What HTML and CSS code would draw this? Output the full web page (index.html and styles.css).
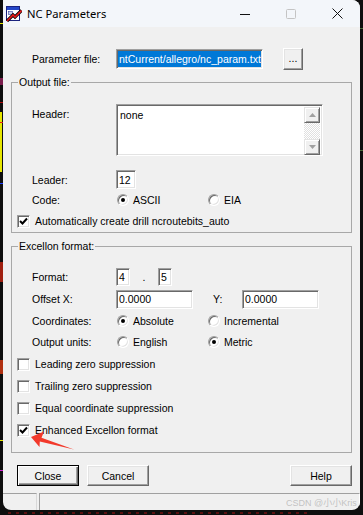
FILE: index.html
```html
<!DOCTYPE html>
<html>
<head>
<meta charset="utf-8">
<title>NC Parameters</title>
<link rel="stylesheet" href="styles.css">
</head>
<body>
<div class="screen">
  <span class="deco d1"></span>
  <span class="deco d2"></span>
  <span class="deco d3"></span>
  <span class="deco d4"></span>
  <span class="deco d5"></span>
  <span class="deco d6"></span>
  <span class="deco d7"></span>
  <span class="deco d8"></span>
  <span class="deco d9"></span>
  <span class="deco d10"></span>
  <span class="deco d11"></span>
  <span class="deco d12"></span>
  <span class="deco d13"></span>

  <div class="window">
    <div class="titlebar">
      <svg class="app-icon" viewBox="0 0 16 16" width="16" height="16">
        <rect x="0.5" y="0.5" width="13" height="14" fill="#fff" stroke="#1a237e"/>
        <rect x="1" y="1" width="12" height="3" fill="#2447c8"/>
        <rect x="2.5" y="5.5" width="4" height="3" fill="#c8cde8" stroke="#3a4aa0" stroke-width="0.6"/>
        <path d="M1 15 L7 9 L9 11 L15.5 4.5" stroke="#000" stroke-width="3.2" fill="none"/>
        <path d="M1 15 L7 9 L9 11 L15.5 4.5" stroke="#ee1c1c" stroke-width="1.6" fill="none"/>
      </svg>
      <span class="title">NC Parameters</span>
      <div class="caption">
        <span class="cap"><svg width="10" height="10" viewBox="0 0 10 10"><path d="M0 5.5 H10" stroke="#111" stroke-width="1"/></svg></span>
        <span class="cap"><svg width="10" height="10" viewBox="0 0 10 10"><rect x="0.5" y="0.5" width="9" height="9" rx="1" fill="none" stroke="#c4c4c4" stroke-width="1"/></svg></span>
        <span class="cap"><svg width="11" height="11" viewBox="0 0 11 11"><path d="M0.5 0.5 L10.5 10.5 M10.5 0.5 L0.5 10.5" stroke="#111" stroke-width="1"/></svg></span>
      </div>
    </div>

    <div class="content">
      <div class="param-row">
        <span class="label">Parameter file:</span>
        <div class="field param-field"><span class="sel">ntCurrent/allegro/nc_param.txt</span></div>
        <button class="btn browse">...</button>
      </div>

      <fieldset class="group output">
        <legend>Output file:</legend>
        <div class="gbody out-body">
          <div class="row header-row">
            <span class="label top">Header:</span>
            <div class="field textarea">
              <span class="ta-text">none</span>
              <div class="vscroll">
                <span class="sbtn"><svg width="7" height="4" viewBox="0 0 7 4"><path d="M0 4 L3.5 0 L7 4 Z" fill="#a0a0a0"/></svg></span>
                <span class="track"></span>
                <span class="sbtn"><svg width="7" height="4" viewBox="0 0 7 4"><path d="M0 0 L3.5 4 L7 0 Z" fill="#a0a0a0"/></svg></span>
              </div>
            </div>
          </div>
          <div class="row leader-row">
            <span class="label">Leader:</span>
            <div class="field leader">12</div>
          </div>
          <div class="row code-row">
            <span class="label">Code:</span>
            <span class="opt"><span class="radio"><span class="dot"></span></span><span>ASCII</span></span>
            <span class="opt"><span class="radio"></span><span>EIA</span></span>
          </div>
          <div class="crow auto-row">
            <span class="check"><svg width="9" height="9" viewBox="0 0 9 9"><path d="M1 4 L3.5 6.5 L8 1.5" stroke="#000" stroke-width="2" fill="none"/></svg></span>
            <span>Automatically create drill ncroutebits_auto</span>
          </div>
        </div>
      </fieldset>

      <fieldset class="group excellon">
        <legend>Excellon format:</legend>
        <div class="gbody exc-body">
          <div class="row r22">
            <span class="label">Format:</span>
            <div class="field fmt">4</div>
            <span class="fdot">.</span>
            <div class="field fmt">5</div>
          </div>
          <div class="row r22">
            <span class="label">Offset X:</span>
            <div class="field offset">0.0000</div>
            <span class="ylabel">Y:</span>
            <div class="field offset">0.0000</div>
          </div>
          <div class="row r21">
            <span class="label">Coordinates:</span>
            <span class="opt"><span class="radio"><span class="dot"></span></span><span>Absolute</span></span>
            <span class="opt"><span class="radio"></span><span>Incremental</span></span>
          </div>
          <div class="row r22">
            <span class="label">Output units:</span>
            <span class="opt"><span class="radio"></span><span>English</span></span>
            <span class="opt"><span class="radio"><span class="dot"></span></span><span>Metric</span></span>
          </div>
          <div class="crow r22">
            <span class="check"></span>
            <span>Leading zero suppression</span>
          </div>
          <div class="crow r22">
            <span class="check"></span>
            <span>Trailing zero suppression</span>
          </div>
          <div class="crow r22">
            <span class="check"></span>
            <span>Equal coordinate suppression</span>
          </div>
          <div class="crow r22">
            <span class="check"><svg width="9" height="9" viewBox="0 0 9 9"><path d="M1 4 L3.5 6.5 L8 1.5" stroke="#000" stroke-width="2" fill="none"/></svg></span>
            <span>Enhanced Excellon format</span>
          </div>
        </div>
      </fieldset>

      <div class="buttons">
        <button class="btn default">Close</button>
        <button class="btn">Cancel</button>
        <button class="btn help">Help</button>
      </div>
    </div>

    <div class="statusbar">
      <span class="panel p1"></span>
      <span class="panel p2"></span>
    </div>
  </div>

  <svg class="arrow" width="363" height="515" viewBox="0 0 363 515">
    <polygon points="31,437 44,431.5 41.5,437.8 74,449.6 39.8,441.6 39.5,447" fill="#f2392b"/>
  </svg>
  <div class="watermark">CSDN @小小Kris</div>
</div>
</body>
</html>
```

FILE: styles.css
```css
* { box-sizing: border-box; }

html, body {
  margin: 0;
  padding: 0;
}

body {
  background: #0e0e0e;
  font-family: "Liberation Sans", Arial, sans-serif;
  font-size: 10.5px;
  color: #000;
}

.screen {
  position: relative;
  width: 363px;
  height: 515px;
  overflow: hidden;
  background: #0e0e0e;
}

/* background canvas decorations (the PCB editor behind the dialog) */
.deco { position: absolute; display: block; }
.d1 { left: 0; top: 23px; width: 4px; height: 1px; background: #e6e600; }
.d2 { left: 0; top: 78px; width: 4px; height: 7px; background: #7a1d4c; }
.d3 { left: 0; top: 102px; width: 3px; height: 1px; background: #b01010; }
.d4 { left: 0; top: 112px; width: 2px; height: 60px; background: #e6e600; }
.d5 { left: 0; top: 122px; width: 4px; height: 1px; background: #e02020; }
.d6 { left: 0; top: 183px; width: 4px; height: 1px; background: #2040ff; }
.d7 { left: 0; top: 262px; width: 3px; height: 20px; background: #a02010; }
.d8 { left: 0; top: 360px; width: 3px; height: 14px; background: #b03010; }
.d9 { left: 0; top: 440px; width: 3px; height: 1px; background: #e6e600; }
.d10 { left: 0; top: 470px; width: 3px; height: 1px; background: #d020d0; }
.d11 { left: 360px; top: 28px; width: 3px; height: 1px; background: #4a6a3a; }
.d12 { left: 360px; top: 150px; width: 3px; height: 1px; background: #4a6a3a; }
.d13 { left: 8px; top: 512px; width: 300px; height: 2px; background: repeating-linear-gradient(90deg, #5a1010 0 3px, transparent 3px 8px); }

.window {
  position: relative;
  z-index: 1;
  margin-left: 3px;
  width: 357px;
  height: 510px;
  background: #f0f0f0;
  border-radius: 0 8px 8px 8px;
  overflow: hidden;
  display: flex;
  flex-direction: column;
}

.titlebar {
  height: 27px;
  flex: none;
  background: #f3f6fa;
  display: flex;
  align-items: center;
  padding-left: 3px;
}

.app-icon { flex: none; display: block; }

.title {
  margin-left: 5px;
  font-family: "Noto Sans", "Liberation Sans", sans-serif;
  font-size: 11.2px;
  color: #000;
}

.caption {
  margin-left: auto;
  display: flex;
}

.cap {
  width: 46px;
  height: 27px;
  display: flex;
  align-items: center;
  justify-content: center;
}

.content {
  padding: 21px 8px 0;
  display: flex;
  flex-direction: column;
}

.label {
  width: 84px;
  flex: none;
  white-space: nowrap;
}

.label.top {
  align-self: flex-start;
  padding-top: 4px;
}

.param-row {
  height: 22px;
  display: flex;
  align-items: center;
  padding-left: 21px;
}

.field {
  background: #fff;
  border: 1px solid;
  border-color: #a0a0a0 #fff #fff #a0a0a0;
  box-shadow: inset 1px 1px #696969, inset -1px -1px #e3e3e3;
  height: 19px;
  padding: 0 2px;
  display: flex;
  align-items: center;
  white-space: nowrap;
  overflow: hidden;
  flex: none;
}

.param-field {
  width: 147px;
  height: 20px;
  padding: 1px;
}

.sel {
  display: flex;
  align-items: center;
  height: 100%;
  width: 100%;
  background: #0078d7;
  color: #fff;
  padding-left: 1px;
  overflow: hidden;
  white-space: nowrap;
}

.btn {
  font-family: inherit;
  font-size: inherit;
  color: #000;
  background: #f0f0f0;
  border: 1px solid;
  border-color: #fff #696969 #696969 #fff;
  box-shadow: inset -1px -1px #a0a0a0, inset 1px 1px #e3e3e3;
  width: 62px;
  height: 21px;
  padding: 0;
  margin: 0;
  flex: none;
}

.btn.default {
  border-color: #000;
  box-shadow: inset 1px 1px #fff, inset -1px -1px #696969, inset -2px -2px #a0a0a0;
}

.browse {
  width: 20px;
  height: 22px;
  margin-left: 20px;
  padding-bottom: 3px;
}

.group {
  margin: 0;
  padding: 0;
  min-width: 0;
  border: 1px solid #a8a8a8;
}

.group legend {
  margin-left: 6px;
  padding: 0 1px;
  line-height: 13px;
}

.output { margin-top: 6px; }
.excellon { margin-top: 7px; }

.gbody {
  display: flex;
  flex-direction: column;
  padding-left: 5px;
}

.out-body { padding-top: 15px; }
.exc-body { padding-top: 13px; padding-bottom: 11px; }

.row {
  display: flex;
  align-items: center;
  padding-left: 15px;
}

.crow {
  display: flex;
  align-items: center;
  gap: 5px;
}

.header-row { height: 52px; align-items: flex-start; }
.leader-row { height: 21px; margin-top: 13px; }
.code-row { height: 20px; }
.auto-row { height: 22px; }
.r22 { height: 22px; }
.r21 { height: 21px; }

.textarea {
  width: 207px;
  height: 52px;
  padding: 2px 2px 2px 3px;
  align-items: flex-start;
}

.ta-text {
  flex: 1;
  padding-top: 2px;
}

.vscroll {
  width: 16px;
  height: 48px;
  display: flex;
  flex-direction: column;
  flex: none;
}

.sbtn {
  width: 16px;
  height: 16px;
  flex: none;
  background: #f0f0f0;
  border: 1px solid;
  border-color: #e3e3e3 #696969 #696969 #e3e3e3;
  box-shadow: inset 1px 1px #fff, inset -1px -1px #a0a0a0;
  display: flex;
  align-items: center;
  justify-content: center;
}

.track {
  flex: 1;
  background: repeating-conic-gradient(#ffffff 0 25%, #e0e0e0 0 50%) 0 0 / 2px 2px;
}

.leader { width: 20px; }

.opt {
  width: 91px;
  flex: none;
  display: flex;
  align-items: center;
  gap: 4px;
  padding-left: 1px;
  white-space: nowrap;
}

.radio {
  width: 12px;
  height: 12px;
  flex: none;
  border-radius: 50%;
  background: #fff;
  border: 1px solid;
  border-color: #a0a0a0 #fff #fff #a0a0a0;
  box-shadow: inset 1px 1px #696969, inset -1px -1px #e3e3e3;
  display: flex;
  align-items: center;
  justify-content: center;
}

.dot {
  width: 4px;
  height: 4px;
  border-radius: 50%;
  background: #000;
}

.check {
  width: 13px;
  height: 13px;
  flex: none;
  background: #fff;
  border: 1px solid;
  border-color: #a0a0a0 #fff #fff #a0a0a0;
  box-shadow: inset 1px 1px #696969, inset -1px -1px #e3e3e3;
  display: flex;
  align-items: center;
  justify-content: center;
}

.fmt { width: 14px; height: 18px; }

.fdot {
  width: 28px;
  text-align: center;
  flex: none;
}

.offset { width: 77px; }

.ylabel {
  width: 29px;
  margin-left: 20px;
  flex: none;
}

.buttons {
  display: flex;
  margin-top: 12px;
  padding-left: 6px;
  gap: 8px;
}

.help { margin-left: auto; }

.statusbar {
  margin-top: auto;
  height: 17px;
  flex: none;
  display: flex;
  gap: 2px;
}

.panel {
  border-top: 1px solid #a0a0a0;
  border-left: 1px solid #a0a0a0;
  border-right: 1px solid #fff;
}

.p1 { width: 34px; border-left: none; border-right-color: #d8d8d8; }
.p2 { flex: 1; }

.arrow {
  position: absolute;
  left: 0;
  top: 0;
  z-index: 2;
  pointer-events: none;
}

.watermark {
  position: absolute;
  z-index: 3;
  left: 286px;
  top: 497px;
  font-family: "Liberation Sans", "Noto Sans CJK SC", sans-serif;
  font-size: 9px;
  line-height: 12px;
  white-space: nowrap;
  color: rgba(185, 185, 185, 0.85);
}
```
